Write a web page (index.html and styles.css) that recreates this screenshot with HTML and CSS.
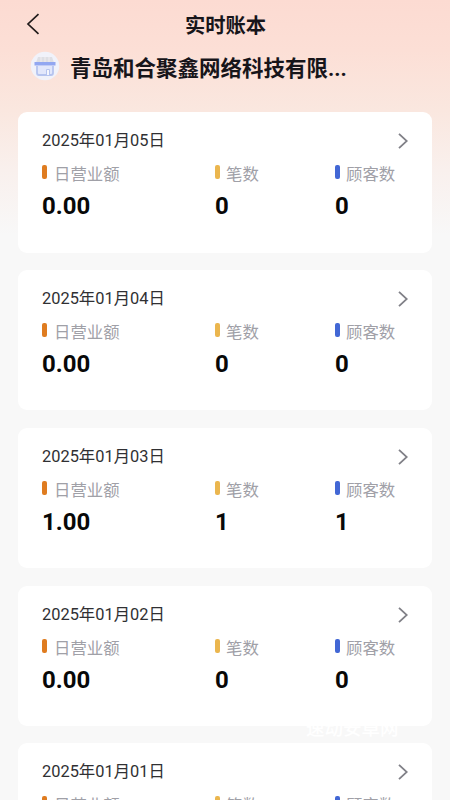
FILE: index.html
```html
<!DOCTYPE html>
<html lang="zh-CN">
<head>
<meta charset="utf-8">
<meta name="viewport" content="width=device-width, initial-scale=1">
<title>实时账本</title>
<link rel="stylesheet" href="styles.css">
</head>
<body>
<header class="navbar">
  <svg class="back" viewBox="0 0 14 22"><path d="M12.500 1.200 2 11l10.500 9.800"/></svg>
  <h1>实时账本</h1>
</header>
<div class="shop">
  <svg class="shop-icon" viewBox="0 0 30 30">
    <circle cx="15" cy="15" r="14.300" fill="#f1f2fa"/>
    <path d="M8 6h14l2.500 7h-19z" fill="#dedfe5"/>
    <path d="M11 6v5M15 6v5M19 6v5" stroke="#f1edf0" stroke-width="1"/>
    <path d="M4.500 11h21v3.500h-21z" fill="#92a7f1"/>
    <path d="M7 15v7q0 2 2 2h12q2 0 2-2v-7" fill="#e2e7fb" stroke="#b6c4ef" stroke-width="1.800"/>
    <path d="M16.500 24v-5.500h3v5.500" fill="#f5f6fd" stroke="#b6c4ef"/>
  </svg>
  <span class="shop-name">青岛和合聚鑫网络科技有限...</span>
</div>
<main class="list" id="list"></main>
<div class="watermark">速动安卓网</div>
<template id="card">
  <section class="card">
    <div class="card-head"><span class="date"></span><svg class="arrow" viewBox="0 0 10 16"><path d="M1 .8 8.800 8 1 15.200"/></svg></div>
    <div class="stats">
      <div class="stat orange"><div class="label">日营业额</div><div class="value"></div></div>
      <div class="stat yellow"><div class="label">笔数</div><div class="value"></div></div>
      <div class="stat blue"><div class="label">顾客数</div><div class="value"></div></div>
    </div>
  </section>
</template>
<script src="script.js"></script>
</body>
</html>
```
FILE: styles.css
```css
* { box-sizing: border-box; }
body {
  margin: 0;
  height: 800px;
  overflow: hidden;
  position: relative;
  font-family: Roboto, "Noto Sans CJK SC", sans-serif;
  color: #17151a;
  background: #f8f8f8 linear-gradient(#fcdbd2 0, #fcdfd6 50px, #fae7df 110px, #f9f0ed 170px, #f8f8f8 235px) no-repeat;
}
.navbar {
  height: 48px;
  display: flex;
  align-items: center;
  padding-left: 26px;
}
.back { width: 14px; height: 22px; }
.back path { fill: none; stroke: #211b1b; stroke-width: 1.7; }
h1 {
  flex: 1;
  margin: 4px 39px 0 0;
  text-align: center;
  font-size: 20.300px;
  line-height: 24px;
  font-weight: 700;
}
.shop {
  display: flex;
  align-items: center;
  height: 37px;
  padding-left: 30px;
  font-size: 21.500px;
  line-height: 30px;
  font-weight: 700;
}
.shop-icon { width: 30px; height: 30px; margin: 0 10px 1px 0; }
.shop-name { padding-top: 4px; }
.list { padding: 27.300px 18px 0; display: grid; gap: 17.300px; }
.card {
  height: 140.450px;
  border-radius: 9px;
  background: #fff;
  padding: 17px 24px 0 24px;
}
.card-head {
  display: flex;
  justify-content: space-between;
  align-items: center;
  height: 24px;
}
.date { font-size: 16.400px; line-height: 24px; color: #303033; }
.arrow { width: 10px; height: 16px; }
.arrow path { fill: none; stroke: #808087; stroke-width: 1.8; }
.stats {
  display: grid;
  grid-template-columns: 173px 120px 1fr;
  margin-top: 8px;
}
.label {
  display: flex;
  align-items: center;
  gap: 6px;
  height: 24px;
  font-size: 16.400px;
  color: #a0a0a7;
  white-space: nowrap;
}
.label::before {
  content: "";
  width: 5px;
  height: 14px;
  margin-bottom: 2px;
  border-radius: 2px;
}
.orange .label { gap: 7px; }
.orange .label::before { background: #df7c20; }
.yellow .label::before { background: #ebb64e; }
.blue .label::before { background: #4267d5; }
.value { font-size: 24px; line-height: 28px; margin-top: 7px; font-weight: 700; color: #080808; }
.watermark {
  position: absolute;
  left: 306px;
  top: 717px;
  font-size: 18.500px;
  line-height: 24px;
  font-weight: 500;
  color: #fff;
}
```
FILE: script.js
```js
const days = [["05", "0.00", "0"], ["04", "0.00", "0"], ["03", "1.00", "1"], ["02", "0.00", "0"], ["01", "0.00", "0"]];
const list = document.getElementById("list");
for (const [day, total, count] of days) {
  const card = document.getElementById("card").content.cloneNode(true);
  card.querySelector(".date").textContent = `2025年01月${day}日`;
  card.querySelectorAll(".value").forEach((el, i) => { el.textContent = i ? count : total; });
  list.append(card);
}
```
